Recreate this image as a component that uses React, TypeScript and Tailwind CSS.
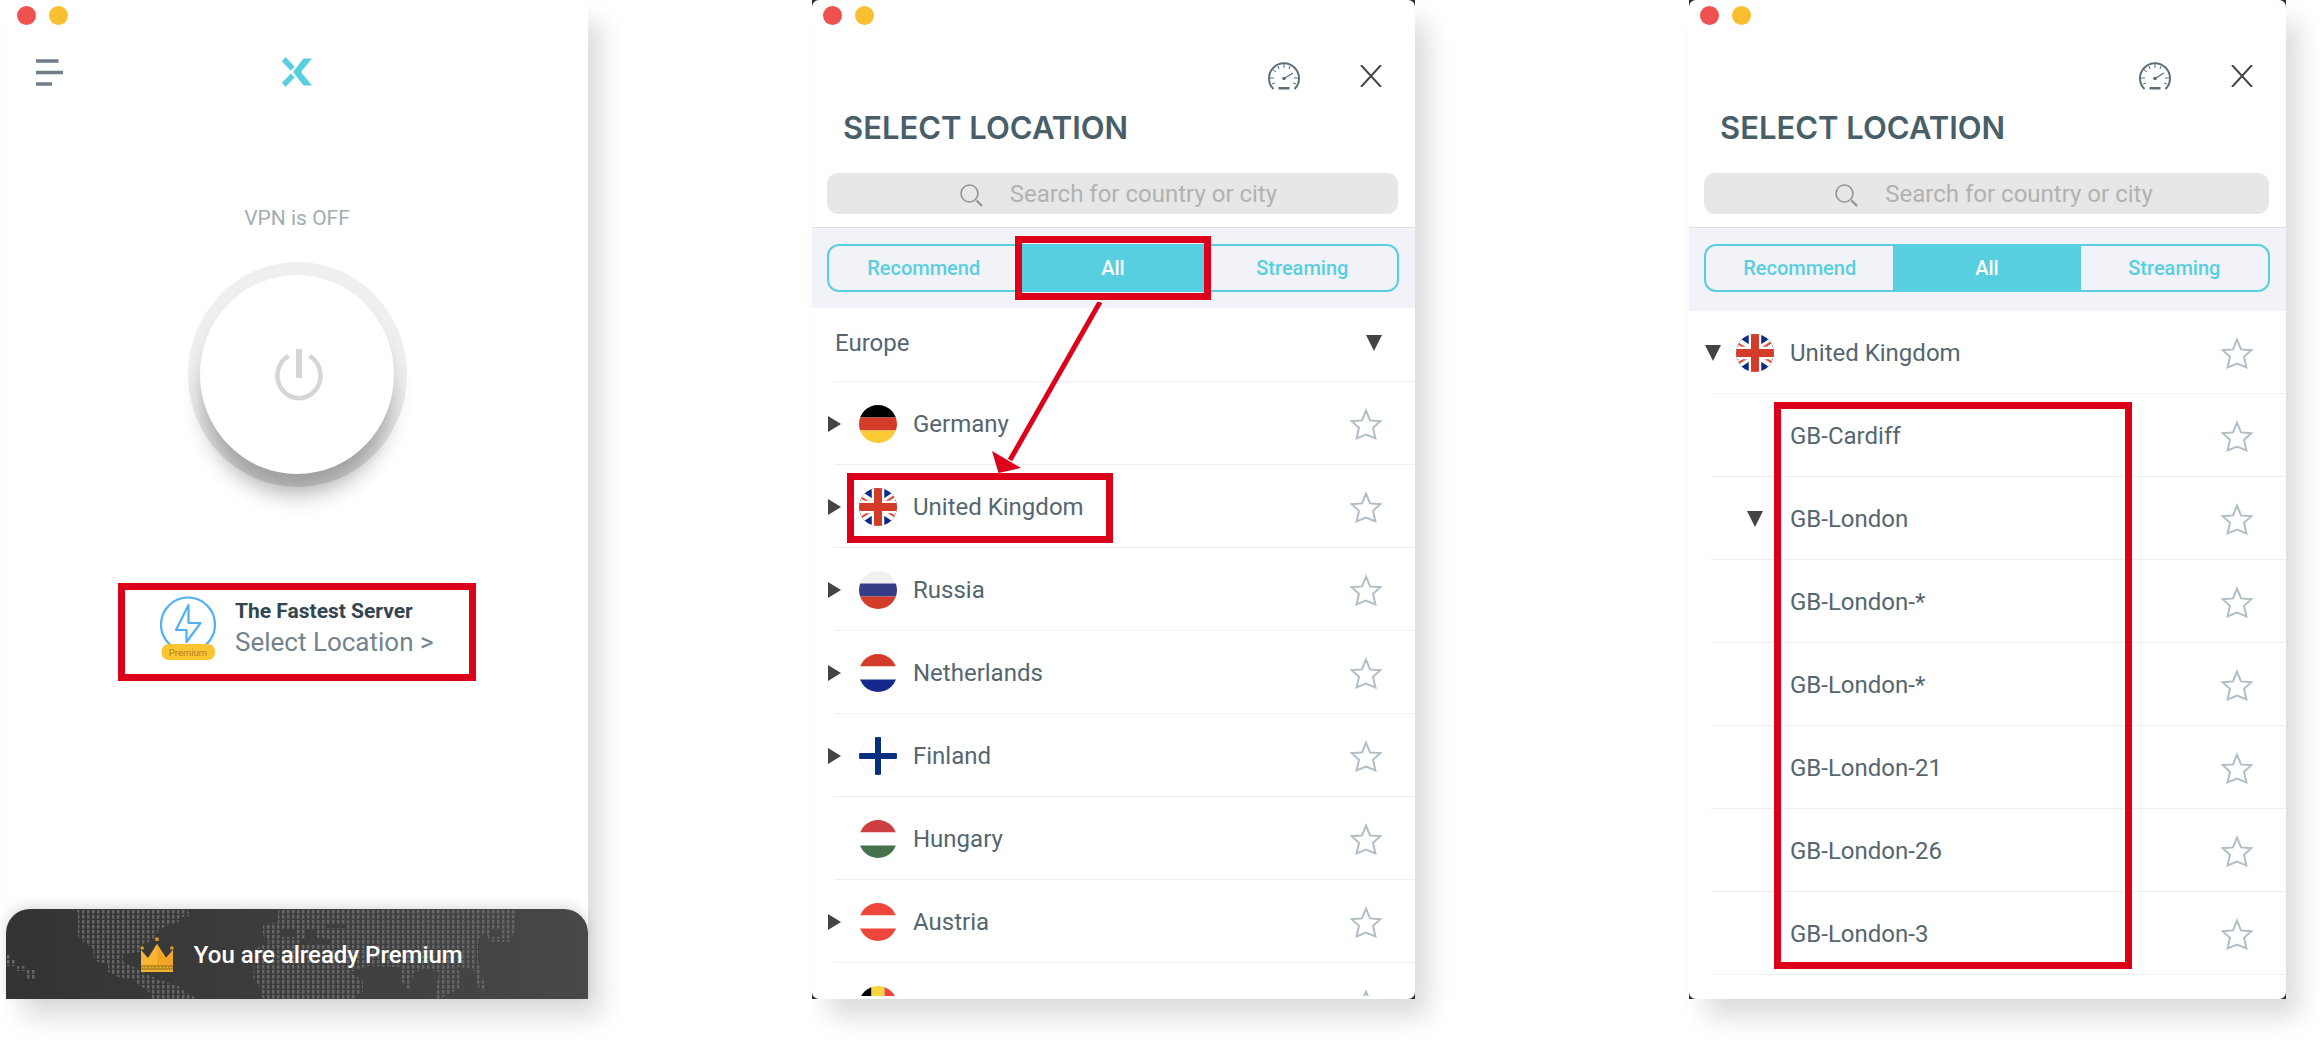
import type { ReactNode } from 'react';

interface LocationItem {
  name: string;
  flag?: string;
  expand?: 'right' | 'down';
  nested?: boolean;
  highlighted?: boolean;
}

const europe: LocationItem[] = [
  { name: 'Germany', flag: 'de', expand: 'right' },
  { name: 'United Kingdom', flag: 'gb', expand: 'right', highlighted: true },
  { name: 'Russia', flag: 'ru', expand: 'right' },
  { name: 'Netherlands', flag: 'nl', expand: 'right' },
  { name: 'Finland', flag: 'fi', expand: 'right' },
  { name: 'Hungary', flag: 'hu' },
  { name: 'Austria', flag: 'at', expand: 'right' },
];

const ukServers: LocationItem[] = [
  { name: 'GB-Cardiff', nested: true },
  { name: 'GB-London', nested: true, expand: 'down' },
  { name: 'GB-London-*', nested: true },
  { name: 'GB-London-*', nested: true },
  { name: 'GB-London-21', nested: true },
  { name: 'GB-London-26', nested: true },
  { name: 'GB-London-3', nested: true },
];

const stripes: Record<string, string[]> = {
  de: ['#000000', '#d43c2a', '#fbcb36'],
  ru: ['#f0f0f0', '#353d88', '#d43c2a'],
  nl: ['#d43c2a', '#ffffff', '#15288c'],
  hu: ['#cd3e40', '#ffffff', '#46714d'],
  at: ['#ee463b', '#ffffff', '#ee463b'],
};

function Flag({ code }: { code: string }) {
  return (
    <svg viewBox="0 0 38 38" className="size-[38px] rounded-full" aria-hidden="true">
      {stripes[code]?.map((color, i) => (
        <rect key={i} y={[0, 12.5, 25.5][i]} width="38" height={[12.5, 13, 12.5][i]} fill={color} />
      ))}
      {code === 'gb' && (
        <>
          <rect width="38" height="38" fill="#0f2a86" />
          <path d="M-10 0 48 38M-10 38 48 0" stroke="#fff" strokeWidth="8" />
          <path d="M-2 7 10 14.5M26 14.5 40 5M-2 32 13 22.5M28 23.5 40 31" stroke="#e2503f" strokeWidth="2.2" />
          <path d="M19 0V38M0 19H38" stroke="#fff" strokeWidth="12.5" />
          <path d="M19 0V38M0 19H38" stroke="#d43c2a" strokeWidth="8" />
        </>
      )}
      {code === 'fi' && (
        <>
          <circle cx="19" cy="19" r="18.5" fill="#fff" stroke="#f0f0f0" />
          <path d="M19 0V38M0 19H38" stroke="#06307f" strokeWidth="6" />
        </>
      )}
      {code === 'be' && (
        <>
          <rect width="12.5" height="38" fill="#000" />
          <rect x="12.5" width="13" height="38" fill="#fbd444" />
          <rect x="25.5" width="12.5" height="38" fill="#ee463b" />
        </>
      )}
    </svg>
  );
}

function Triangle({ dir }: { dir: 'right' | 'down' }) {
  return dir === 'right' ? (
    <svg viewBox="0 0 13 16" className="h-4 w-[13px]" fill="#444" aria-hidden="true">
      <path d="M0 0 13 8 0 16Z" />
    </svg>
  ) : (
    <svg viewBox="0 0 16 16" className="size-4" fill="#444" aria-hidden="true">
      <path d="M0 0H16L8 16Z" />
    </svg>
  );
}

function Star() {
  return (
    <svg viewBox="0 0 32 32" className="size-8" fill="none" stroke="#b0bec5" strokeWidth="2" aria-hidden="true">
      <path d="M16 2.6 20 12.4 30.4 13.2 23 19.8 25.4 30.4 16 26.6 6.6 30.4 9 19.8 1.6 13.2 12 12.4Z" />
    </svg>
  );
}

function Gauge() {
  return (
    <svg viewBox="0 0 32 28" className="h-7 w-8" fill="none" stroke="#5b6f7b" strokeWidth="2" aria-hidden="true">
      <path d="M5.5 27A15 15 0 1 1 26.5 27" />
      <path d="M16 2V6M10 4 11 7M22 4 21 7M5 8 8 10M2 16H6M26 16H30M4 22 7 21M28 22 25 21" strokeWidth="1" />
      <path d="M16 16.5 25 11" strokeWidth="1.3" />
      <circle cx="16" cy="16.5" r="1.8" fill="#5b6f7b" stroke="none" />
      <path d="M10.5 26.3H21.5" strokeWidth="2.6" />
    </svg>
  );
}

function WindowDots() {
  return (
    <div className="flex gap-[13px] pt-[6px] pl-[11px]">
      <button aria-label="Close window" className="size-[19px] rounded-full bg-[#ee514f]" />
      <button aria-label="Minimize window" className="size-[19px] rounded-full bg-[#f9bf30]" />
    </div>
  );
}

function LocationRow({ item }: { item: LocationItem }) {
  return (
    <li className="relative">
      <div className="flex h-[82px] items-center pt-[2px] pr-[33px] pl-4">
        <span className="w-[31px] shrink-0">
          {item.expand && !item.nested && <Triangle dir={item.expand} />}
        </span>
        <span className="flex w-[38px] shrink-0 justify-center">
          {item.flag && <Flag code={item.flag} />}
          {item.nested && item.expand && <Triangle dir={item.expand} />}
        </span>
        <span className="ml-4 flex-1 text-2xl text-[#546670]">{item.name}</span>
        <button aria-label="Add to favorites">
          <Star />
        </button>
      </div>
      <div className="ml-[22px] border-b border-[#eeeeee]" />
      {item.highlighted && (
        <div className="pointer-events-none absolute top-[8px] bottom-[5px] left-[35px] w-[266px] border-7 border-[#dc001b]" />
      )}
    </li>
  );
}

function Tabs({ highlighted }: { highlighted?: boolean }) {
  return (
    <div className="border-t border-[#dedede] bg-[#f2f3f8] py-4 pr-4 pl-[15px]">
      <div className="grid h-12 grid-cols-3 rounded-xl border-2 border-[#57cfe0] text-xl font-medium text-[#57cfe0]">
        <button>Recommend</button>
        <div className="relative flex">
          <button className="-my-px flex-1 bg-[#57cfe0] text-white">All</button>
          {highlighted && (
            <div className="pointer-events-none absolute -inset-x-[3px] -inset-y-[10px] border-7 border-[#dc001b]" />
          )}
        </div>
        <button>Streaming</button>
      </div>
    </div>
  );
}

function LocationPanel({ id, highlighted, children }: { id: string; highlighted?: boolean; children: ReactNode }) {
  return (
    <div className="h-full bg-[#26323a]">
      <div className="relative h-full overflow-hidden rounded-[7px] bg-white">
        <WindowDots />
        <div className="mt-[37px] flex items-center justify-end gap-[60px] pr-[33px]">
          <button aria-label="Speed test">
            <Gauge />
          </button>
          <button aria-label="Close">
            <svg viewBox="0 0 22 22" className="size-[22px]" stroke="#454545" strokeWidth="2" aria-hidden="true">
              <path d="M1 0 21 22M21 0 1 22" />
            </svg>
          </button>
        </div>
        <h2 className="mt-5 pl-[31px] font-[Inter,sans-serif] text-[31px] leading-9 font-semibold text-[#485f6a]">
          SELECT LOCATION
        </h2>
        <label
          htmlFor={id}
          className="mt-[27px] mr-[17px] mb-[13px] ml-[15px] flex h-[41px] items-center gap-[27px] rounded-[11px] bg-[#e7e7e7] pl-[22%]"
        >
          <svg viewBox="0 0 23 23" className="mt-1 size-[23px] shrink-0" fill="none" stroke="#949494" aria-hidden="true">
            <circle cx="9.5" cy="9.5" r="8.5" strokeWidth="1.6" />
            <path d="M16.5 16.5 22 22" strokeWidth="2.4" />
          </svg>
          <input
            id={id}
            type="text"
            placeholder="Search for country or city"
            className="min-w-0 flex-1 bg-transparent text-2xl text-[#546670] outline-none placeholder:text-[#b2b2b2]"
          />
        </label>
        <Tabs highlighted={highlighted} />
        {children}
      </div>
    </div>
  );
}

function PremiumBar() {
  return (
    <button className="relative mt-auto flex h-[90px] items-center overflow-hidden rounded-t-[24px] bg-linear-to-r from-[#333333] to-[#484848] pt-[2px] pl-[23%] shadow-[0_-4px_12px_rgba(0,0,0,0.12)]">
      <svg
        viewBox="0 0 582 90"
        preserveAspectRatio="xMidYMid slice"
        className="absolute inset-0 size-full"
        aria-hidden="true"
      >
        <defs>
          <pattern id="map-dots" width="5" height="5" patternUnits="userSpaceOnUse">
            <rect x="1" y="1" width="2.4" height="3.6" fill="#666" />
          </pattern>
        </defs>
        <g fill="url(#map-dots)">
          <path d="M63 0 72 3V27L78 33 87 40 88 52 102 55V63L112 68 127 70 133 77 141 80 146 90H192L178 82 172 77 157 72 137 64 133 60 117 53V45L135 43V37L149 30 153 20 172 13 174 8 186 7 180 0Z" />
          <path
            fillRule="evenodd"
            d="M272 0H510V18L504 33H484L480 23 472 30V53L480 80 474 83 467 60 451 58 455 67 453 80 433 90H429L433 63 423 60 408 63 404 82 396 73 394 58 361 57 345 63 357 72V82L347 90H257L253 77 247 70 249 40 263 33 257 27V15L272 13ZM275 20H290V28H275ZM300 20H310V29L325 30V35H292L300 28ZM320 15H340V19H320ZM485 20H494V28H485Z"
          />
          <path d="M0 45H5V50H10V57H20V62H10V57H0ZM20 60H29V70H20Z" />
        </g>
      </svg>
      <svg viewBox="0 0 34 36" className="relative h-9 w-[34px]" aria-hidden="true">
        <path d="M1 31V13L8 21 17 7 26 21 33 13V31Z" fill="#fbb434" />
        <path d="M17 7 26 21 33 13V31H17Z" fill="#f3a526" />
        <rect x="1" y="28" width="32" height="4.5" fill="#bd8a1e" />
        <rect x="1" y="32.5" width="32" height="2.5" fill="#f0b62e" />
        <path d="M2 30.5H32" stroke="#e8c14a" strokeDasharray="1.5 2" />
        <rect x="15.3" y="0.5" width="3.4" height="3.4" fill="#e09a1c" />
        <circle cx="2.2" cy="11" r="1.8" fill="#d9a026" />
        <circle cx="31.8" cy="11" r="1.8" fill="#d9a026" />
      </svg>
      <span className="relative ml-[20px] text-2xl font-medium text-white">You are already Premium</span>
    </button>
  );
}

function HomePanel() {
  return (
    <div className="flex h-full flex-col bg-white">
      <WindowDots />
      <div className="mt-[31px] grid h-8 grid-cols-3 items-center px-[30px]">
        <button aria-label="Menu" className="justify-self-start">
          <svg viewBox="0 0 27 27" className="size-[27px]" stroke="#6f7f88" strokeWidth="3.4" aria-hidden="true">
            <path d="M0 2H22.5M0 13.5H27M0 25H16" />
          </svg>
        </button>
        <svg viewBox="0 0 30 30" className="size-[30px] justify-self-center" fill="#57cfe0" aria-hidden="true">
          <path d="M0 4.5 3.5 0 12.5 9.5 9 14Z" />
          <path d="M9 16.5 12.5 20.5 3.5 30 0 25.5Z" />
          <path d="M21.5 1.5H30L19 15 30 28.5H21.5L11 15Z" />
        </svg>
      </div>
      <p className="mt-[114px] text-center text-[21px] leading-8 text-[#a3adb2]">VPN is OFF</p>
      <div className="mt-7 flex h-[225px] w-[219px] items-center justify-center self-center rounded-[50%] bg-linear-to-b from-[#efefef] from-50% to-[#e2e2e2]">
        <button
          aria-label="Turn VPN on"
          className="flex h-[199px] w-[194px] items-center justify-center rounded-[50%] bg-white shadow-[0_24px_22px_-4px_rgba(0,0,0,0.3)]"
        >
          <svg viewBox="0 0 48 52" className="ml-1 h-[52px] w-12" fill="none" stroke="#d6d6d6" aria-hidden="true">
            <path d="M13.5 7A21.5 22.5 0 1 0 34.5 7" strokeWidth="4.5" />
            <path d="M24 0V29" strokeWidth="6" />
          </svg>
        </button>
      </div>
      <div className="mt-24 mb-[228px] self-center border-7 border-[#dc001b]">
        <button className="flex h-[84px] w-[344px] items-start gap-[19px] pt-[6px] pl-[35px] text-left">
          <svg viewBox="0 0 56 64" className="h-16 w-14" fill="none" aria-hidden="true">
            <circle cx="28" cy="28.5" r="27" stroke="#4fb0f3" strokeWidth="2.2" />
            <path d="M28.5 9 16 34H26.5V46L40.5 27H28.5Z" stroke="#4fb0f3" strokeWidth="2.2" strokeLinejoin="round" />
            <rect x="1.5" y="48" width="53.5" height="16" rx="7" fill="#fbc531" />
            <text x="28" y="59.5" textAnchor="middle" fontSize="9.5" fill="#b97a25">
              Premium
            </text>
          </svg>
          <span className="flex flex-col">
            <span className="text-[21px] leading-[30px] font-bold text-[#33454f]">The Fastest Server</span>
            <span className="text-[26px] leading-8 text-[#74838b]">Select Location &gt;</span>
          </span>
        </button>
      </div>
      <PremiumBar />
    </div>
  );
}

export default function App() {
  return (
    <main className="flex min-h-screen items-start bg-white pr-[34px] pb-[42px] pl-[6px] font-[Roboto,sans-serif]">
      <div className="flex flex-1 items-stretch">
        <section className="grow-582 basis-0 shadow-[15px_20px_24px_-2px_rgba(0,0,0,0.14)]">
          <HomePanel />
        </section>

        <section className="relative ml-[224px] grow-603 basis-0 shadow-[15px_20px_24px_-2px_rgba(0,0,0,0.14)]">
          <LocationPanel id="search-all" highlighted>
            <button className="flex h-[73px] w-full items-center justify-between pr-[33px] pb-1 pl-[23px] text-2xl text-[#546670]">
              Europe
              <Triangle dir="down" />
            </button>
            <div className="ml-[22px] border-b border-[#eeeeee]" />
            <ul>
              {europe.map((item) => (
                <LocationRow key={item.name} item={item} />
              ))}
            </ul>
            <ul className="mb-[3px] h-[33px] overflow-hidden">
              <LocationRow item={{ name: '', flag: 'be' }} />
            </ul>
          </LocationPanel>
          <svg
            viewBox="0 0 114 172"
            className="pointer-events-none absolute top-[302px] left-[178px] h-[172px] w-[114px]"
            aria-hidden="true"
          >
            <path d="M110 0 20 158" stroke="#dc001b" strokeWidth="5" />
            <path d="M2 149 31 166 8.5 171Z" fill="#dc001b" />
          </svg>
        </section>

        <section className="ml-[274px] grow-597 basis-0 shadow-[15px_20px_24px_-2px_rgba(0,0,0,0.14)]">
          <LocationPanel id="search-uk">
            <ul className="border-t-3 border-[#f2f3f8]">
              <LocationRow item={{ name: 'United Kingdom', flag: 'gb', expand: 'down' }} />
            </ul>
            <div className="relative">
              <ul>
                {ukServers.map((item, i) => (
                  <LocationRow key={i} item={item} />
                ))}
              </ul>
              <div className="pointer-events-none absolute top-[8px] right-[154px] bottom-[6px] left-[85px] border-7 border-[#dc001b]" />
            </div>
          </LocationPanel>
        </section>
      </div>
    </main>
  );
}
